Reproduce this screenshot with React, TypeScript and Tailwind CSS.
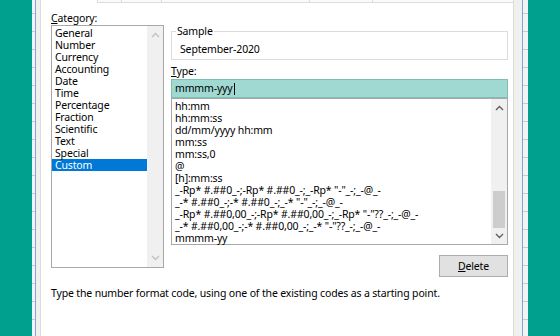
import React from 'react'

const categories = ['General', 'Number', 'Currency', 'Accounting', 'Date', 'Time', 'Percentage', 'Fraction', 'Scientific', 'Text', 'Special', 'Custom']

const formats = [
  'hh:mm',
  'hh:mm:ss',
  'dd/mm/yyyy hh:mm',
  'mm:ss',
  'mm:ss,0',
  '@',
  '[h]:mm:ss',
  '_-Rp* #.##0_-;-Rp* #.##0_-;_-Rp* "-"_-;_-@_-',
  '_-* #.##0_-;-* #.##0_-;_-* "-"_-;_-@_-',
  '_-Rp* #.##0,00_-;-Rp* #.##0,00_-;_-Rp* "-"??_-;_-@_-',
  '_-* #.##0,00_-;-* #.##0,00_-;_-* "-"??_-;_-@_-',
  'mmmm-yy',
]

const Chevron = ({ up }: { up?: boolean }) => (
  <svg width="9" height="6" viewBox="0 0 9 6">
    <polyline points={up ? '1,5 4.5,1.5 8,5' : '1,1 4.5,4.5 8,1'} fill="none" stroke="currentColor" strokeWidth="1.4" />
  </svg>
)

const Strip = ({ w }: { w: string }) => (
  <div className={`${w} bg-[repeating-linear-gradient(to_bottom,#f3f3f3_0px,#f3f3f3_13px,#c9c9c9_13px,#c9c9c9_14px,#f3f3f3_14px,#f3f3f3_18px)]`} />
)

export default function App() {
  return (
    <div className="flex h-[336px] w-[560px] overflow-hidden bg-[#f0f0f0] font-['Noto_Sans',sans-serif] text-[10.5px] tracking-[-0.15px] text-black">
      <div className="w-[32px] bg-[#00a08e]" />
      <Strip w="w-[3px]" />
      <div className="w-[1px] bg-[#7aa9dc]" />
      <div className="w-[4px]" />

      <div className="flex w-[474px] flex-col">
        {/* tab strip */}
        <div className="flex h-[3px]">
          <div className="w-[58px] border-x border-[#dcdcdc] bg-white" />
          <div className="w-[24px] border-r border-b border-[#dcdcdc] bg-[#fafafa]" />
          <div className="w-[40px] border-r border-b border-[#dcdcdc] bg-[#fafafa]" />
          <div className="w-[148px] border-r border-b border-[#dcdcdc] bg-[#fafafa]" />
          <div className="w-[63px] border-r border-b border-[#dcdcdc] bg-[#fafafa]" />
          <div className="flex-1 border-r border-b border-[#dcdcdc] bg-[#fafafa]" />
        </div>

        <div className="flex flex-1 flex-col border-x border-[#dcdcdc] bg-white pt-[8px] pl-[10px] pr-[5px]">
          <div className="flex gap-[7px]">
            <div className="flex w-[113px] flex-col">
              <div className="h-[14px] leading-[14px]"><span className="underline">C</span>ategory:</div>
              <div className="flex h-[243px] border border-[#a8a8a8]">
                <div className="flex-1 pt-[1px]">
                  {categories.map((c) => (
                    <div key={c} className={`h-[12px] pl-[3px] leading-[12px] ${c === 'Custom' ? 'bg-[#0078d7] text-white' : ''}`}>{c}</div>
                  ))}
                </div>
                <div className="flex w-[16px] flex-col items-center justify-between bg-[#f0f0f0] py-[6px] text-[#c2c2c2]">
                  <Chevron up />
                  <Chevron />
                </div>
              </div>
            </div>

            <div className="flex flex-1 flex-col">
              <div className="relative mt-[20px] h-[29px] border border-[#dcdcdc] pt-[10px] pl-[8px] leading-[14px]">
                <span className="absolute left-[4px] top-[-7px] bg-white px-[1px] leading-[12px]">Sample</span>
                September-2020
              </div>
              <div className="mt-[4px] h-[14px] leading-[14px]"><span className="underline">T</span>ype:</div>
              <div className="mt-[1px] flex h-[19px] items-center border border-[#7fbdb5] bg-[#9fd9d2] pl-[3px]">
                mmmm-yyy<span className="ml-[1px] h-[12px] w-[1px] bg-black" />
              </div>
              <div className="flex h-[147px] border border-[#a8a8a8]">
                <div className="flex-1 pt-[1px]">
                  {formats.map((f) => (
                    <div key={f} className="h-[12px] whitespace-pre pl-[3px] leading-[12px]">{f}</div>
                  ))}
                </div>
                <div className="flex w-[16px] flex-col bg-[#f0f0f0] text-[#606060]">
                  <div className="flex h-[17px] items-center justify-center"><Chevron up /></div>
                  <div className="flex-1" />
                  <div className="mx-[2px] h-[37px] bg-[#cdcdcd]" />
                  <div className="flex h-[16px] items-center justify-center"><Chevron /></div>
                </div>
              </div>
              <button className="mt-[10px] h-[22px] w-[69px] self-end border border-[#adadad] bg-[#e1e1e1] leading-[20px]">
                <span className="underline">D</span>elete
              </button>
            </div>
          </div>
          <div className="mt-[9px] h-[14px] leading-[14px]">Type the number format code, using one of the existing codes as a starting point.</div>
        </div>
      </div>

      <div className="w-[8px]" />
      <div className="w-[1px] bg-[#7aa9dc]" />
      <Strip w="w-[5px]" />
      <div className="flex-1 bg-[#00a08e]" />
    </div>
  )
}
